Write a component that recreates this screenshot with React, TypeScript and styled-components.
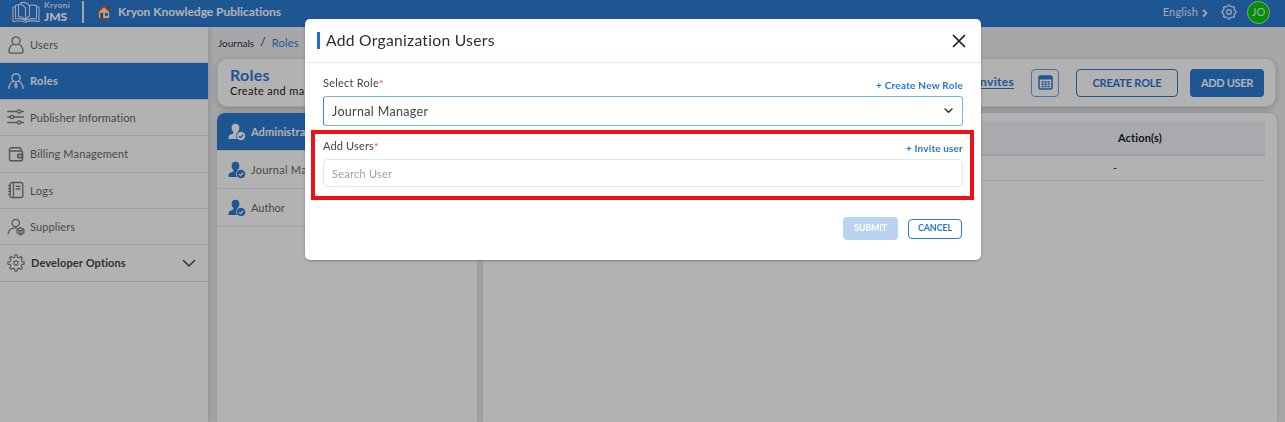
import React from "react";
import styled, { createGlobalStyle, css } from "styled-components";

const blue = "#2c7bd5";

const GlobalStyle = createGlobalStyle`
  * { box-sizing: border-box; }
  html, body { margin: 0; height: 100%; overflow: hidden; }
  body { font-family: Lato, "Open Sans", sans-serif; font-size: 11px; color: #333; }
  svg { display: block; flex: none; }
`;

const Page = styled.div`
  height: 422px;
  display: flex;
  flex-direction: column;
  background: #eff0f3;
  overflow: hidden;
`;

const Text = styled.span<{ $size?: number; $weight?: number; $track?: number; $color?: string }>`
  font-size: ${(p) => p.$size ?? 11}px;
  font-weight: ${(p) => p.$weight ?? 400};
  letter-spacing: ${(p) => p.$track ?? 0.12}px;
  font-variant-ligatures: none;
  white-space: nowrap;
  line-height: 1.2;
  ${(p) => p.$color && css`color: ${p.$color};`}
`;

const Header = styled.header`
  height: 27px;
  flex: none;
  display: flex;
  align-items: flex-start;
  padding-left: 12px;
  background: ${blue};
  color: #fff;
`;

const Brand = styled.div`
  display: flex;
  gap: 4px;
  width: 70px;
  padding-top: 1px;
`;

const BrandName = styled.div`
  display: flex;
  flex-direction: column;
  span:first-child { line-height: 9px; }
  span:last-child { line-height: 13px; }
`;

const Divider = styled.div`
  width: 2px;
  height: 22px;
  margin-top: 1px;
  background: #e9eef5;
`;

const Publication = styled.div`
  display: flex;
  align-items: center;
  gap: 7px;
  height: 24px;
  margin-left: 13px;
`;

const HeaderTools = styled.div`
  display: flex;
  align-items: center;
  height: 24px;
  margin-left: auto;
  padding-right: 15px;
  color: #eaf1fa;
`;

const Language = styled.div`
  display: flex;
  align-items: center;
  gap: 4px;
  margin-right: 13px;
  svg { margin-top: 2px; }
`;

const Avatar = styled.div`
  width: 23px;
  height: 23px;
  margin-left: 10px;
  border: 1px solid #d5e6d5;
  border-radius: 50%;
  background: #00cf00;
  display: flex;
  align-items: center;
  justify-content: center;
`;

const Body = styled.div`
  flex: 1;
  display: flex;
  min-height: 0;
`;

const Sidebar = styled.nav`
  width: 208px;
  flex: none;
  background: #fff;
  box-shadow: 2px 0 6px rgba(0, 0, 0, 0.12);
`;

const NavItem = styled.div<{ $active?: boolean; $strong?: boolean }>`
  height: 36.4px;
  padding: 0 12px 0 7px;
  display: flex;
  align-items: center;
  gap: ${(p) => (p.$strong ? 6 : 5)}px;
  border-bottom: 1px solid #e2e3f0;
  color: ${(p) => (p.$active ? "#fff" : p.$strong ? "#4a4a4a" : "#6a6a6a")};
  background: ${(p) => (p.$active ? blue : "transparent")};
  > svg:first-child { color: ${(p) => (p.$active ? "#e4edf8" : "#7c7c7c")}; }
  > svg:last-child { margin-left: auto; }
`;

const Content = styled.main`
  flex: 1;
  min-width: 0;
  display: flex;
  flex-direction: column;
  padding: 0 8px 0 9px;
`;

const Crumbs = styled.div`
  height: 31px;
  display: flex;
  align-items: center;
  gap: 6px;
  padding-left: 1px;
`;

const TitleCard = styled.section`
  height: 49px;
  flex: none;
  margin-right: 1px;
  padding: 0 11px 0 12px;
  display: flex;
  align-items: center;
  border: 1px solid #dbe5f3;
  border-radius: 10px;
  background: #fff;
  box-shadow: 0 2px 6px rgba(0, 0, 0, 0.2);
`;

const TitleBlock = styled.div`
  display: flex;
  flex-direction: column;
  padding-bottom: 3px;
`;

const Actions = styled.div`
  display: flex;
  align-items: center;
  margin-left: auto;
`;

const InvitesLink = styled.a`
  color: ${blue};
  text-decoration: underline;
  text-underline-offset: 2px;
  margin-right: 17px;
`;

const IconButton = styled.button`
  width: 28px;
  height: 28px;
  padding: 0;
  display: flex;
  align-items: center;
  justify-content: center;
  border: 1px solid #6ba3e4;
  border-radius: 4px;
  background: #fff;
  margin-right: 17px;
`;

const Button = styled.button<{ $kind: "solid" | "outline" | "muted"; $w: number; $h: number }>`
  width: ${(p) => p.$w}px;
  height: ${(p) => p.$h}px;
  padding: 0;
  display: flex;
  align-items: center;
  justify-content: center;
  border-radius: 4px;
  font-family: inherit;
  border: ${(p) => (p.$kind === "outline" ? `1.5px solid ${blue}` : "none")};
  color: ${(p) => (p.$kind === "outline" ? "#2876d2" : "#fff")};
  background: ${(p) => (p.$kind === "outline" ? "#fff" : p.$kind === "solid" ? blue : "#b9d3f1")};
`;

const ButtonPair = styled.div`
  display: flex;
  gap: 12px;
`;

const Panels = styled.div`
  flex: 1;
  display: flex;
  gap: 6px;
  margin-top: 6px;
  min-height: 0;
`;

const RoleList = styled.section`
  width: 260px;
  flex: none;
  background: #fff;
  border-radius: 8px 0 0 0;
  box-shadow: 0 0 5px rgba(0, 0, 0, 0.14);
  overflow: hidden;
`;

const RoleRow = styled.div<{ $active?: boolean }>`
  height: 38px;
  padding: 0 0 0 11px;
  display: flex;
  align-items: center;
  gap: 5px;
  border-bottom: 1px solid #e9e9ee;
  color: ${(p) => (p.$active ? "#fff" : "#6a6a6a")};
  background: ${(p) => (p.$active ? blue : "transparent")};
`;

const TablePanel = styled.section`
  flex: 1;
  padding: 8px 12px 0 10px;
  background: #fff;
  border-radius: 0 8px 0 0;
  box-shadow: 0 0 5px rgba(0, 0, 0, 0.14);
`;

const TableRow = styled.div<{ $head?: boolean }>`
  height: ${(p) => (p.$head ? 35 : 25)}px;
  display: grid;
  grid-template-columns: 1fr 250px;
  align-items: center;
  background: ${(p) => (p.$head ? "#f2f4f9" : "#fff")};
  border-bottom: ${(p) => (p.$head ? "2px solid #e0e5ef" : "1px solid #e8e8e8")};
`;

const ActionCell = styled.div<{ $dash?: boolean }>`
  grid-column: 2;
  padding-left: ${(p) => (p.$dash ? 98 : 103)}px;
`;

const Overlay = styled.div`
  position: fixed;
  inset: 0;
  display: flex;
  justify-content: center;
  align-items: flex-start;
  padding: 19px 0 0 1px;
  background: rgba(0, 0, 0, 0.3);
`;

const Modal = styled.div`
  position: relative;
  width: 676px;
  height: 241px;
  background: #fff;
  border-radius: 5px;
  box-shadow: 0 1px 3px rgba(0, 0, 0, 0.3);
`;

const ModalHeader = styled.div`
  height: 44px;
  padding: 0 15px 0 12px;
  display: flex;
  align-items: center;
  border-bottom: 1px solid #e5ebf2;
  svg { margin-left: auto; }
`;

const Accent = styled.div`
  width: 3px;
  height: 17px;
  margin: 0 6px 1px 0;
  background: #1d6fd3;
`;

const Form = styled.div`
  padding: 13px 18px 0;
`;

const FieldHead = styled.div`
  height: 20px;
  display: flex;
  justify-content: space-between;
`;

const Star = styled.span`
  color: #ff5a1f;
  font-weight: 700;
  font-size: 10px;
  letter-spacing: 0;
`;

const AddLink = styled.a`
  color: #2876d2;
  padding-top: 2px;
`;

const Select = styled.div`
  height: 30px;
  margin-bottom: 13px;
  padding: 0 8px 0 8px;
  display: flex;
  align-items: center;
  justify-content: space-between;
  border: 1px solid #82b1e8;
  border-left-color: #3b84da;
  border-radius: 3px;
`;

const SearchField = styled.div`
  height: 28px;
  padding: 2px 0 0 8px;
  display: flex;
  align-items: center;
  border: 1px solid #e5e5e7;
  border-radius: 4px;
`;

const Footer = styled.div`
  display: flex;
  align-items: center;
  justify-content: flex-end;
  gap: 10px;
  margin-top: 30px;
  padding-right: 1px;
`;

const Highlight = styled.div`
  position: absolute;
  left: 6px;
  top: 111px;
  width: 663px;
  height: 70px;
  border: 4px solid #ea1215;
`;

const line = { fill: "none", stroke: "currentColor", strokeLinecap: "round", strokeLinejoin: "round" } as const;

const LogoIcon = () => (
  <svg width="28" height="22" viewBox="0 0 28 22" {...line} stroke="#dfe9f6" strokeWidth="1.1">
    <path d="M13.5 19.5C10.500 17.500 7 17.300 3.500 18V4.500L6 4M13.500 19.500C16.500 17.500 20.500 17.300 24.500 18V4.500C22 4 19.500 4 17.500 4.500" />
    <path d="M3.500 6H1V20.500C6 19.500 10 19.800 13.500 21.300C17 19.800 22 19.500 27 20.500V6H24.500" />
    <path d="M6.500 15.500V3.500C9 3 11.500 4 13.500 7V18.500C11.500 16.500 9 15.500 6.500 15.500ZM9 3V1.500C13 1 16.500 2.500 17.500 5.500V15C16 15.500 14.500 17 13.500 18.500" />
  </svg>
);

const HomeIcon = () => (
  <svg width="14" height="16" viewBox="0 0 15 16">
    <rect x="10.500" y="1" width="2" height="4" fill="#c8401c" />
    <path d="M2 7L7.500 2L13 7V15H2Z" fill="#eee9e4" />
    <path d="M7.500.500L15 7.300L13.800 8.700L7.500 3L1.200 8.700L0 7.300Z" fill="#e34a1e" />
    <rect x="3.500" y="9" width="3" height="6" fill="#c23f17" />
    <rect x="8.500" y="9" width="3.200" height="3.200" fill="#1f86c4" />
    <path d="M1.500 15H13.500" stroke="#c9502c" />
  </svg>
);

const gearPath = (cx: number, r1: number, r2: number, n: number) => {
  const pts: string[] = [];
  const step = (Math.PI * 2) / n;
  for (let i = 0; i < n; i++) {
    const a = i * step - Math.PI / 2;
    ([[-0.3, r1], [-0.17, r2], [0.17, r2], [0.3, r1]] as const).forEach(([o, r]) => {
      pts.push(`${(cx + r * Math.cos(a + o * step)).toFixed(2)} ${(cx + r * Math.sin(a + o * step)).toFixed(2)}`);
    });
  }
  return `M${pts.join("L")}Z`;
};

const GearIcon = ({ size = 18, inner = 6, outer = 8.2, stroke = 1.1, hub = 2.1 }) => (
  <svg width={size} height={size} viewBox="0 0 18 18" {...line} strokeWidth={stroke}>
    <path d={gearPath(9, inner, outer, 8)} />
    <circle cx="9" cy="9" r={hub} />
  </svg>
);

const UserIcon = () => (
  <svg width="18" height="18" viewBox="0 0 18 18" {...line} strokeWidth="1.300">
    <circle cx="9" cy="4.800" r="4" />
    <path d="M5.800 8.500C3.300 9.700 2 12 2 15.500Q2 17.200 3.800 17.200H14.200Q16 17.200 16 15.500C16 12 14.700 9.700 12.200 8.500" />
  </svg>
);

const RoleIcon = () => (
  <svg width="18" height="18" viewBox="0 0 18 18" {...line} strokeWidth="1.400">
    <circle cx="9" cy="5.800" r="4.100" />
    <path d="M6.200 9C3.800 10.500 2.200 13 1.800 16.300M11.800 9C14.200 10.500 15.800 13 16.200 16.300" />
    <path d="M8.200 11H9.800L10.300 15L9 16.500L7.700 15Z" fill="currentColor" strokeWidth=".5" />
  </svg>
);

const SlidersIcon = () => (
  <svg width="18" height="18" viewBox="0 0 18 18" {...line} strokeWidth="1.300">
    <path d="M.800 3.500H10.200M14 3.500H16.500M.800 9H3M7 9H16.500M.800 14.500H10.200M14 14.500H16.500" />
    <circle cx="12.100" cy="3.500" r="1.700" /><circle cx="5" cy="9" r="1.700" /><circle cx="12.100" cy="14.500" r="1.700" />
  </svg>
);

const WalletIcon = () => (
  <svg width="18" height="18" viewBox="0 0 18 18" {...line} strokeWidth="1.400">
    <path d="M2.500 4.500V14Q2.500 15.800 4.300 15.800H13.700Q15.500 15.800 15.500 14V7.800Q15.500 6 13.700 6H4.200Q2.500 6 2.500 4.400T4.200 2.700H12.500Q14 2.700 14 4.200V5.800" />
    <path d="M15.500 9H12.500A1.900 1.900 0 0 0 12.500 12.800H15.500Z" fill="currentColor" fillOpacity=".35" />
  </svg>
);

const LogIcon = () => (
  <svg width="18" height="18" viewBox="0 0 18 18" {...line} strokeWidth="1.300">
    <rect x="3" y="1.500" width="12.800" height="15" rx="2" />
    <path d="M6.500 1.500V16.500M9.300 5.300H13M9.300 8H13M1.800 4.500H3.500M1.800 7.500H3.500M1.800 10.500H3.500M1.800 13.500H3.500" />
  </svg>
);

const SupplierIcon = () => (
  <svg width="18" height="18" viewBox="0 0 18 18" {...line} strokeWidth="1.300">
    <circle cx="8.700" cy="5" r="3.700" />
    <path d="M1.200 15.500C1.800 12 4.500 9.900 8 9.900H9.500" />
    <path d="M13.500 9.500L16.900 11.200V15L13.500 16.900L10.100 15V11.200ZM10.300 11.300L13.500 13L16.700 11.300M13.500 13V16.800" fill="currentColor" fillOpacity=".4" strokeWidth="1.100" />
  </svg>
);

const MemberIcon = ({ active }: { active?: boolean }) => (
  <svg width="18" height="18" viewBox="0 0 18 18">
    <path d="M7.500.800C4.800.800 3.400 2.700 3.600 5.200C3.800 7 4.500 8 5.300 8.800V10.500L1.800 12C.900 12.400.500 13.500.500 16H10.500V11L9.700 10.500V8.800C10.500 8 11.200 7 11.400 5.200C11.600 2.700 10.200.800 7.500.800Z" fill={active ? "#fff" : blue} />
    <circle cx="13" cy="13" r="4.600" fill={active ? "#fff" : blue} stroke={active ? blue : "#fff"} strokeWidth=".8" />
    <path d="M10.900 13.100L12.500 14.600L15.200 11.700" fill="none" stroke={active ? blue : "#fff"} strokeWidth="1.300" />
  </svg>
);

const Chevron = ({ w, h, stroke, d }: { w: number; h: number; stroke: number; d: string }) => (
  <svg width={w} height={h} viewBox={`0 0 ${w} ${h}`} {...line} strokeWidth={stroke}><path d={d} /></svg>
);

const TableIcon = () => (
  <svg width="15" height="15" viewBox="0 0 15 15" fill="none" stroke={blue}>
    <rect x="1" y="1" width="13" height="13" rx="1.500" strokeWidth="1.500" />
    <path d="M1 1.500H14V4H1Z" fill={blue} />
    <path d="M3.500 7H5.700M6.500 7H8.700M9.500 7H11.700M3.500 9.300H5.700M6.500 9.300H8.700M9.500 9.300H11.700M3.500 11.600H5.700M6.500 11.600H8.700M9.500 11.600H11.700" strokeWidth="1.500" />
  </svg>
);

const navItems = [
  { label: "Users", icon: <UserIcon />, track: 0.25 },
  { label: "Roles", icon: <RoleIcon />, active: true, track: 0.35 },
  { label: "Publisher Information", icon: <SlidersIcon />, track: 0.1 },
  { label: "Billing Management", icon: <WalletIcon />, track: 0.15 },
  { label: "Logs", icon: <LogIcon />, track: 0.45 },
  { label: "Suppliers", icon: <SupplierIcon />, track: 0.12 },
];

export default function App() {
  return (
    <>
      <GlobalStyle />
      <Page>
        <Header>
          <Brand>
            <LogoIcon />
            <BrandName>
              <Text $size={8} $weight={700} $track={0.4} $color="#dfe9f6">Kryoni</Text>
              <Text $size={12} $weight={900} $track={0}>JMS</Text>
            </BrandName>
          </Brand>
          <Divider />
          <Publication>
            <HomeIcon />
            <Text $size={12} $weight={700} $track={-0.03}>Kryon Knowledge Publications</Text>
          </Publication>
          <HeaderTools>
            <Language>
              <Text $track={0.15}>English</Text>
              <Chevron w={6} h={10} stroke={1.8} d="M1.500 2.500L4.500 5.200L1.500 8" />
            </Language>
            <GearIcon size={16} inner={6.6} outer={7.8} stroke={1.4} hub={2.6} />
            <Avatar><Text $size={11}>JO</Text></Avatar>
          </HeaderTools>
        </Header>
        <Body>
          <Sidebar>
            {navItems.map((n) => (
              <NavItem key={n.label} $active={n.active}>
                {n.icon}
                <Text $weight={n.active ? 700 : 400} $track={n.track}>{n.label}</Text>
              </NavItem>
            ))}
            <NavItem $strong>
              <GearIcon />
              <Text $weight={700} $track={0.14}>Developer Options</Text>
              <Chevron w={14} h={9} stroke={1.5} d="M1.500 1.500L7 7L12.500 1.500" />
            </NavItem>
          </Sidebar>
          <Content>
            <Crumbs>
              <Text $size={10} $track={0}>Journals</Text>
              <Text $size={12}>/</Text>
              <Text $track={0.2} $color={blue}>Roles</Text>
            </Crumbs>
            <TitleCard>
              <TitleBlock>
                <Text $size={16} $weight={700} $track={0.25} $color={blue}>Roles</Text>
                <Text $track={0.35} $color="#222">Create and ma</Text>
              </TitleBlock>
              <Actions>
                <InvitesLink><Text $size={12} $weight={700} $track={0.3}>Invites</Text></InvitesLink>
                <IconButton><TableIcon /></IconButton>
                <ButtonPair>
                  <Button $kind="outline" $w={102} $h={28}><Text $weight={700} $track={-0.18}>CREATE ROLE</Text></Button>
                  <Button $kind="solid" $w={74} $h={28}><Text $weight={700} $track={-0.3}>ADD USER</Text></Button>
                </ButtonPair>
              </Actions>
            </TitleCard>
            <Panels>
              <RoleList>
                <RoleRow $active><MemberIcon active /><Text $weight={700} $track={0.1}>Administrator</Text></RoleRow>
                <RoleRow><MemberIcon /><Text $track={0.25}>Journal Manager</Text></RoleRow>
                <RoleRow><MemberIcon /><Text $track={0}>Author</Text></RoleRow>
              </RoleList>
              <TablePanel>
                <TableRow $head><ActionCell><Text $weight={700} $track={0.13} $color="#222">Action(s)</Text></ActionCell></TableRow>
                <TableRow><ActionCell $dash><Text>-</Text></ActionCell></TableRow>
              </TablePanel>
            </Panels>
          </Content>
        </Body>
      </Page>
      <Overlay>
        <Modal>
          <ModalHeader>
            <Accent />
            <Text $size={15.7} $track={0.26} $color="#2d2f33">Add Organization Users</Text>
            <svg width="14" height="14" viewBox="0 0 14 14" stroke="#1c1c1c" strokeWidth="1.700" strokeLinecap="round">
              <path d="M1.500 1.500L12.500 12.500M12.500 1.500L1.500 12.500" />
            </svg>
          </ModalHeader>
          <Form>
            <FieldHead>
              <Text $track={0.24} $color="#444">Select Role<Star>*</Star></Text>
              <AddLink><Text $size={10} $weight={700} $track={0.24}>+ Create New Role</Text></AddLink>
            </FieldHead>
            <Select>
              <Text $size={12.5} $track={0.33} $color="#444">Journal Manager</Text>
              <Chevron w={11} h={8} stroke={1.5} d="M2 2L5.500 5.300L9 2" />
            </Select>
            <FieldHead>
              <Text $track={0.15} $color="#444">Add Users<Star>*</Star></Text>
              <AddLink><Text $size={10} $weight={700} $track={0.15}>+ Invite user</Text></AddLink>
            </FieldHead>
            <SearchField><Text $track={0.25} $color="#9a9fb8">Search User</Text></SearchField>
            <Footer>
              <Button $kind="muted" $w={55} $h={23}><Text $size={9} $weight={700} $track={-0.15}>SUBMIT</Text></Button>
              <Button $kind="outline" $w={54} $h={20}><Text $size={9} $weight={700} $track={-0.14}>CANCEL</Text></Button>
            </Footer>
          </Form>
          <Highlight />
        </Modal>
      </Overlay>
    </>
  );
}
